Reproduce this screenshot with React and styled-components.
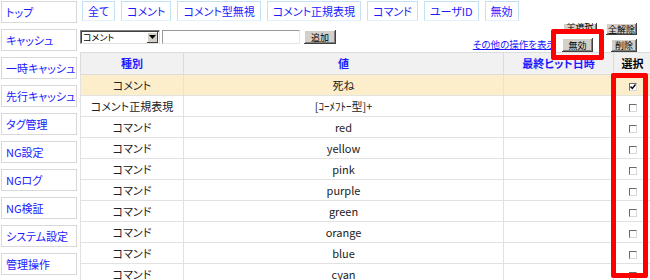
import React from "react";
import styled, { createGlobalStyle } from "styled-components";

const GlobalStyle = createGlobalStyle`
  body {
    margin: 0;
    background: #fff;
    font-family: "Noto Sans CJK JP", "Liberation Sans", sans-serif;
    font-feature-settings: "palt";
    overflow: hidden;
  }
`;

const Page = styled.div`
  position: relative;
  display: flex;
  width: 650px;
  height: 280px;
  overflow: hidden;
`;

// Left navigation
const SideNav = styled.nav`
  display: flex;
  flex-direction: column;
  gap: 6px;
  padding: 1px 0 0 1px;
  width: 76px;
  flex-shrink: 0;
`;

const NavItem = styled.a`
  display: flex;
  align-items: center;
  box-sizing: border-box;
  height: 22px;
  padding-left: 4px;
  border: 1px solid #d9d9d9;
  color: #1a1aff;
  font-size: 11px;
  line-height: 1;
  white-space: nowrap;
  text-decoration: none;
`;

const Main = styled.div`
  display: flex;
  flex-direction: column;
  margin-left: 3px;
  flex: 1;
  min-width: 0;
`;

const TabBar = styled.div`
  display: flex;
  gap: 6px;
  margin: 1px 0 0 2px;
  height: 20px;
`;

const Tab = styled.a`
  display: flex;
  align-items: center;
  box-sizing: border-box;
  height: 20px;
  padding: 0 5px;
  border: 1px solid #c3e1f5;
  border-bottom-color: #e3f1fa;
  color: #1a1aff;
  font-size: 11px;
  line-height: 1;
  white-space: nowrap;
  text-decoration: none;
`;

const Toolbar = styled.div`
  display: flex;
  justify-content: space-between;
  align-items: flex-start;
  height: 34px;
`;

const AddForm = styled.div`
  display: flex;
  align-items: center;
  margin-top: 9px;
`;

const SelectBox = styled.div`
  display: flex;
  align-items: center;
  box-sizing: border-box;
  width: 80px;
  height: 14px;
  border-top: 1px solid #808080;
  border-left: 1px solid #808080;
  border-right: 1px solid #e0e0e0;
  border-bottom: 1px solid #e0e0e0;
  box-shadow: inset 1px 1px #404040;
  font-size: 9px;
  line-height: 1;
  color: #000;
`;

const SelectText = styled.span`
  flex: 1;
  padding-left: 2px;
`;

const SelectArrow = styled.span`
  display: flex;
  align-items: center;
  justify-content: center;
  width: 11px;
  height: 11px;
  margin-right: 1px;
  background: #d4d0c8;
  box-shadow: inset -1px -1px #404040, inset 1px 1px #fff;
`;

const TextInput = styled.input`
  box-sizing: border-box;
  width: 138px;
  height: 14px;
  margin-left: 2px;
  padding: 0;
  border-top: 1px solid #9a9a9a;
  border-left: 1px solid #9a9a9a;
  border-right: 1px solid #e6e6e6;
  border-bottom: 1px solid #e6e6e6;
  outline: none;
`;

const ClassicButton = styled.button`
  display: flex;
  align-items: ${(p) => (p.clipped ? "flex-end" : "center")};
  justify-content: center;
  box-sizing: border-box;
  width: ${(p) => p.w}px;
  height: ${(p) => p.h || 14}px;
  margin-left: ${(p) => p.ml || 0}px;
  padding: 0 0 ${(p) => (p.clipped ? 2 : 0)}px;
  border: none;
  background: #d4d0c8;
  box-shadow: inset -1px -1px #404040, inset 1px 1px #fff,
    inset -2px -2px #808080;
  font-family: inherit;
  font-size: 9px;
  line-height: 1;
  color: #000;
  white-space: nowrap;
  overflow: hidden;
`;

const Actions = styled.div`
  display: flex;
  flex-direction: column;
  align-items: flex-end;
  padding: 2px 13px 0 0;
`;

const ActionRow = styled.div`
  display: flex;
  align-items: ${(p) => p.align || "flex-start"};
  margin-top: ${(p) => p.mt || 0}px;
`;

const MoreLink = styled.a`
  margin-right: 6px;
  color: #1a1aff;
  font-size: 9.5px;
  line-height: 1;
  text-decoration: underline;
  white-space: nowrap;
`;

// Rule table
const Table = styled.table`
  width: 571px;
  border-collapse: collapse;
  table-layout: fixed;
  font-size: 11px;
`;

const HeadCell = styled.th`
  height: 21px;
  padding: 0;
  background: #f1f1f1;
  border: 1px solid #dcdcdc;
  color: ${(p) => (p.plain ? "#000" : "#1a1aff")};
  font-weight: bold;
  font-size: 11px;
  line-height: 1;
  text-align: center;
`;

const Row = styled.tr`
  background: ${(p) => (p.active ? "#fdeecb" : "#fff")};
`;

const Cell = styled.td`
  height: 20px;
  padding: 0;
  border: 1px solid #e2e2e2;
  color: #222;
  line-height: 1;
  text-align: center;
  white-space: nowrap;
`;

const Check = styled.span`
  display: inline-flex;
  align-items: center;
  justify-content: center;
  box-sizing: border-box;
  width: 8px;
  height: 8px;
  background: #fff;
  border-top: 1px solid #6a6a6a;
  border-left: 1px solid #6a6a6a;
  border-right: 1px solid #d8d8d8;
  border-bottom: 1px solid #d8d8d8;
  vertical-align: middle;
`;

const Highlight = styled.div`
  position: absolute;
  box-sizing: border-box;
  border: 5px solid #ff0000;
  border-radius: 2px;
  pointer-events: none;
`;

const navItems = [
  "トップ",
  "キャッシュ",
  "一時キャッシュ",
  "先行キャッシュ",
  "タグ管理",
  "NG設定",
  "NGログ",
  "NG検証",
  "システム設定",
  "管理操作",
];

const tabs = [
  "全て",
  "コメント",
  "コメント型無視",
  "コメント正規表現",
  "コマンド",
  "ユーザID",
  "無効",
];

const rules = [
  { type: "コメント", value: "死ね", checked: true },
  { type: "コメント正規表現", value: "[ｺｰﾒﾌﾄｰ型]+" },
  { type: "コマンド", value: "red" },
  { type: "コマンド", value: "yellow" },
  { type: "コマンド", value: "pink" },
  { type: "コマンド", value: "purple" },
  { type: "コマンド", value: "green" },
  { type: "コマンド", value: "orange" },
  { type: "コマンド", value: "blue" },
  { type: "コマンド", value: "cyan" },
];

const App = () => {
  return (
    <Page>
      <GlobalStyle />
      <SideNav>
        {navItems.map((item) => (
          <NavItem key={item}>{item}</NavItem>
        ))}
      </SideNav>
      <Main>
        <TabBar>
          {tabs.map((tab) => (
            <Tab key={tab}>{tab}</Tab>
          ))}
        </TabBar>
        <Toolbar>
          <AddForm>
            <SelectBox>
              <SelectText>コメント</SelectText>
              <SelectArrow>
                <svg width="7" height="4" viewBox="0 0 7 4">
                  <path d="M0 0h7L3.5 4z" fill="#000" />
                </svg>
              </SelectArrow>
            </SelectBox>
            <TextInput />
            <ClassicButton w={32} ml={4}>
              追加
            </ClassicButton>
          </AddForm>
          <Actions>
            <ActionRow>
              <ClassicButton w={34} h={9} clipped>
                全選択
              </ClassicButton>
              <ClassicButton w={31} h={12} ml={9}>
                全解除
              </ClassicButton>
            </ActionRow>
            <ActionRow align="center" mt={3}>
              <MoreLink>その他の操作を表示</MoreLink>
              <ClassicButton w={31}>無効</ClassicButton>
              <ClassicButton w={26} h={13} ml={18}>
                削除
              </ClassicButton>
            </ActionRow>
          </Actions>
        </Toolbar>
        <Table>
          <colgroup>
            <col style={{ width: 103 }} />
            <col style={{ width: 320 }} />
            <col style={{ width: 110 }} />
            <col style={{ width: 38 }} />
          </colgroup>
          <thead>
            <tr>
              <HeadCell>種別</HeadCell>
              <HeadCell>値</HeadCell>
              <HeadCell>最終ヒット日時</HeadCell>
              <HeadCell plain>選択</HeadCell>
            </tr>
          </thead>
          <tbody>
            {rules.map((rule, i) => (
              <Row key={i} active={rule.checked}>
                <Cell>{rule.type}</Cell>
                <Cell>{rule.value}</Cell>
                <Cell />
                <Cell>
                  <Check>
                    {rule.checked && (
                      <svg width="6" height="6" viewBox="0 0 6 6">
                        <path
                          d="M0.5 2.5L2.3 4.5L5.5 0.5"
                          stroke="#000"
                          strokeWidth="1.4"
                          fill="none"
                        />
                      </svg>
                    )}
                  </Check>
                </Cell>
              </Row>
            ))}
          </tbody>
        </Table>
      </Main>
      <Highlight style={{ left: 551, top: 29, width: 53, height: 31 }} />
      <Highlight style={{ left: 611, top: 73, width: 37, height: 205 }} />
    </Page>
  );
};

export default App;
